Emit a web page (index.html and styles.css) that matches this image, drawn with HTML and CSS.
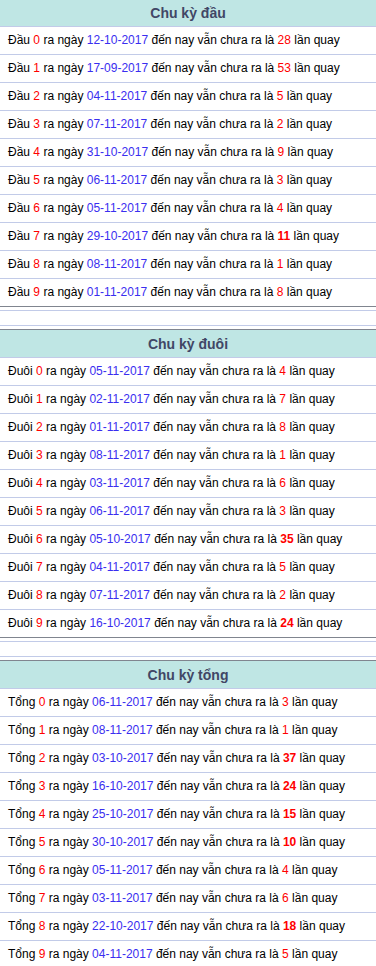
FILE: index.html
```html
<!DOCTYPE html>
<html lang="vi">
<head>
<meta charset="utf-8">
<title>Chu kỳ</title>
<link rel="stylesheet" href="styles.css">
</head>
<body>
<div class="page">
  <section class="block">
    <h2 class="block-title">Chu kỳ đầu</h2>
    <ul class="rows">
      <li class="row">Đầu <span class="num">0</span> ra ngày <span class="date">12-10-2017</span> đến nay vẫn chưa ra là <span class="num">28</span> lần quay</li>
      <li class="row">Đầu <span class="num">1</span> ra ngày <span class="date">17-09-2017</span> đến nay vẫn chưa ra là <span class="num">53</span> lần quay</li>
      <li class="row">Đầu <span class="num">2</span> ra ngày <span class="date">04-11-2017</span> đến nay vẫn chưa ra là <span class="num">5</span> lần quay</li>
      <li class="row">Đầu <span class="num">3</span> ra ngày <span class="date">07-11-2017</span> đến nay vẫn chưa ra là <span class="num">2</span> lần quay</li>
      <li class="row">Đầu <span class="num">4</span> ra ngày <span class="date">31-10-2017</span> đến nay vẫn chưa ra là <span class="num">9</span> lần quay</li>
      <li class="row">Đầu <span class="num">5</span> ra ngày <span class="date">06-11-2017</span> đến nay vẫn chưa ra là <span class="num">3</span> lần quay</li>
      <li class="row">Đầu <span class="num">6</span> ra ngày <span class="date">05-11-2017</span> đến nay vẫn chưa ra là <span class="num">4</span> lần quay</li>
      <li class="row">Đầu <span class="num">7</span> ra ngày <span class="date">29-10-2017</span> đến nay vẫn chưa ra là <span class="num strong">11</span> lần quay</li>
      <li class="row">Đầu <span class="num">8</span> ra ngày <span class="date">08-11-2017</span> đến nay vẫn chưa ra là <span class="num">1</span> lần quay</li>
      <li class="row">Đầu <span class="num">9</span> ra ngày <span class="date">01-11-2017</span> đến nay vẫn chưa ra là <span class="num">8</span> lần quay</li>
    </ul>
  </section>
  <div class="gap"></div>
  <section class="block">
    <h2 class="block-title">Chu kỳ đuôi</h2>
    <ul class="rows">
      <li class="row">Đuôi <span class="num">0</span> ra ngày <span class="date">05-11-2017</span> đến nay vẫn chưa ra là <span class="num">4</span> lần quay</li>
      <li class="row">Đuôi <span class="num">1</span> ra ngày <span class="date">02-11-2017</span> đến nay vẫn chưa ra là <span class="num">7</span> lần quay</li>
      <li class="row">Đuôi <span class="num">2</span> ra ngày <span class="date">01-11-2017</span> đến nay vẫn chưa ra là <span class="num">8</span> lần quay</li>
      <li class="row">Đuôi <span class="num">3</span> ra ngày <span class="date">08-11-2017</span> đến nay vẫn chưa ra là <span class="num">1</span> lần quay</li>
      <li class="row">Đuôi <span class="num">4</span> ra ngày <span class="date">03-11-2017</span> đến nay vẫn chưa ra là <span class="num">6</span> lần quay</li>
      <li class="row">Đuôi <span class="num">5</span> ra ngày <span class="date">06-11-2017</span> đến nay vẫn chưa ra là <span class="num">3</span> lần quay</li>
      <li class="row">Đuôi <span class="num">6</span> ra ngày <span class="date">05-10-2017</span> đến nay vẫn chưa ra là <span class="num strong">35</span> lần quay</li>
      <li class="row">Đuôi <span class="num">7</span> ra ngày <span class="date">04-11-2017</span> đến nay vẫn chưa ra là <span class="num">5</span> lần quay</li>
      <li class="row">Đuôi <span class="num">8</span> ra ngày <span class="date">07-11-2017</span> đến nay vẫn chưa ra là <span class="num">2</span> lần quay</li>
      <li class="row">Đuôi <span class="num">9</span> ra ngày <span class="date">16-10-2017</span> đến nay vẫn chưa ra là <span class="num strong">24</span> lần quay</li>
    </ul>
  </section>
  <div class="gap"></div>
  <section class="block">
    <h2 class="block-title">Chu kỳ tổng</h2>
    <ul class="rows">
      <li class="row">Tổng <span class="num">0</span> ra ngày <span class="date">06-11-2017</span> đến nay vẫn chưa ra là <span class="num">3</span> lần quay</li>
      <li class="row">Tổng <span class="num">1</span> ra ngày <span class="date">08-11-2017</span> đến nay vẫn chưa ra là <span class="num">1</span> lần quay</li>
      <li class="row">Tổng <span class="num">2</span> ra ngày <span class="date">03-10-2017</span> đến nay vẫn chưa ra là <span class="num strong">37</span> lần quay</li>
      <li class="row">Tổng <span class="num">3</span> ra ngày <span class="date">16-10-2017</span> đến nay vẫn chưa ra là <span class="num strong">24</span> lần quay</li>
      <li class="row">Tổng <span class="num">4</span> ra ngày <span class="date">25-10-2017</span> đến nay vẫn chưa ra là <span class="num strong">15</span> lần quay</li>
      <li class="row">Tổng <span class="num">5</span> ra ngày <span class="date">30-10-2017</span> đến nay vẫn chưa ra là <span class="num strong">10</span> lần quay</li>
      <li class="row">Tổng <span class="num">6</span> ra ngày <span class="date">05-11-2017</span> đến nay vẫn chưa ra là <span class="num">4</span> lần quay</li>
      <li class="row">Tổng <span class="num">7</span> ra ngày <span class="date">03-11-2017</span> đến nay vẫn chưa ra là <span class="num">6</span> lần quay</li>
      <li class="row">Tổng <span class="num">8</span> ra ngày <span class="date">22-10-2017</span> đến nay vẫn chưa ra là <span class="num strong">18</span> lần quay</li>
      <li class="row">Tổng <span class="num">9</span> ra ngày <span class="date">04-11-2017</span> đến nay vẫn chưa ra là <span class="num">5</span> lần quay</li>
    </ul>
  </section>
</div>
</body>
</html>
```
FILE: styles.css
```css
html, body {
  margin: 0;
  padding: 0;
  background: #ffffff;
}
body {
  font-family: "Liberation Sans", Arial, sans-serif;
  font-size: 12px;
  color: #000000;
}
.page {
  margin-top: -2px;
  display: flex;
  flex-direction: column;
}
.block {
  border-top: 1px solid #80858f;
}
.block-title {
  margin: 0;
  height: 27px;
  line-height: 28px;
  background: #bfe6e4;
  border-bottom: 1px solid #c2cbe8;
  text-align: center;
  font-size: 14px;
  font-weight: bold;
  color: #414766;
}
.rows {
  list-style: none;
  margin: 0;
  padding: 0;
}
.row {
  height: 27px;
  line-height: 27px;
  padding-left: 8px;
  border-bottom: 1px solid #c2cbe8;
  white-space: nowrap;
}
.row:last-child {
  border-bottom-color: #80858f;
}
.num {
  color: #ff0000;
}
.num.strong {
  font-weight: bold;
}
.date {
  color: #3a2ef0;
}
.gap {
  margin: 3px 0;
  height: 14px;
  border-top: 1px solid #c2cbe8;
  border-bottom: 1px solid #c2cbe8;
}
```
